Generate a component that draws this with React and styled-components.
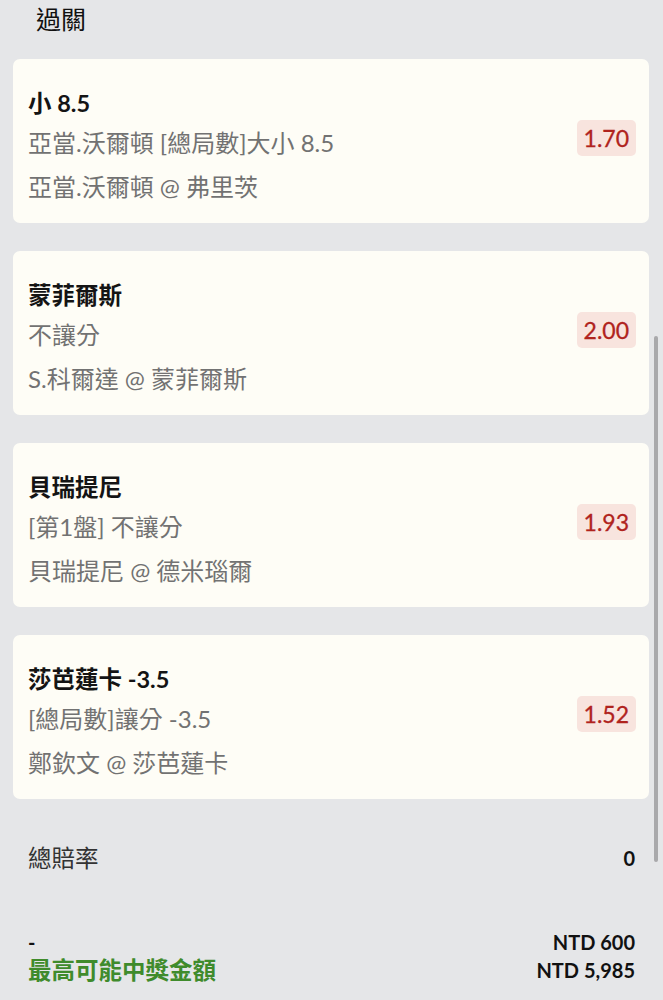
import React from 'react';
import styled, { createGlobalStyle } from 'styled-components';

const GlobalStyle = createGlobalStyle`
  html, body {
    margin: 0;
    padding: 0;
    background: #e5e6e8;
  }
  body {
    font-family: Lato, "Noto Sans CJK TC", sans-serif;
    color: #1a1a1a;
  }
`;

const Page = styled.div`
  position: relative;
  width: 663px;
  height: 1000px;
  overflow: hidden;
  box-sizing: border-box;
  padding: 0 14px 0 13px;
`;

const Heading = styled.div`
  font-size: 25px;
  line-height: 38px;
  padding-left: 23px;
  color: #111;
`;

const List = styled.div`
  display: flex;
  flex-direction: column;
  gap: 28px;
  margin-top: 21px;
`;

const Card = styled.div`
  background: #fefdf6;
  border-radius: 7px;
  height: 164px;
  box-sizing: border-box;
  padding: 26px 13px 0 15px;
  display: flex;
  align-items: center;
  justify-content: space-between;

  .__card_text{
    align-self: flex-start;
    display: flex;
    flex-direction: column;

    &__title{
      font-size: 23.5px;
      font-weight: 700;
      line-height: 36px;
      color: #141414;
    }

    &__line{
      font-size: 24px;
      line-height: 44px;
      color: #727272;
    }
  }
`;

const Odds = styled.div`
  background: #f8e4de;
  color: #b0231d;
  font-size: 23px;
  line-height: 36px;
  padding: 0 7px;
  border-radius: 5px;
  margin-top: -32px;
  -webkit-text-stroke: 0.3px #b0231d;
`;

const Summary = styled.div`
  display: flex;
  justify-content: space-between;
  align-items: center;
  padding: 0 14px 0 15px;
  margin-top: 42px;
  font-size: 23.5px;
  line-height: 34px;
  color: #333;

  b{
    font-size: 20px;
    color: #111;
  }
`;

const Totals = styled.div`
  display: grid;
  grid-template-columns: 1fr auto;
  padding: 0 14px 0 15px;
  margin-top: 53px;
  line-height: 28px;

  .__dash{
    font-size: 20px;
    font-weight: 700;
    color: #111;
  }
  .__label{
    font-size: 23.5px;
    font-weight: 700;
    color: #3f8b2c;
  }
  .__amount{
    font-size: 20px;
    font-weight: 700;
    color: #111;
    text-align: right;
  }
`;

const ScrollThumb = styled.div`
  position: absolute;
  right: 5px;
  top: 336px;
  width: 4px;
  height: 526px;
  border-radius: 2px;
  background: #a9a9ab;
`;

const bets = [
  { title: '小 8.5', market: '亞當.沃爾頓 [總局數]大小 8.5', match: '亞當.沃爾頓 @ 弗里茨', odds: '1.70' },
  { title: '蒙菲爾斯', market: '不讓分', match: 'S.科爾達 @ 蒙菲爾斯', odds: '2.00' },
  { title: '貝瑞提尼', market: '[第1盤] 不讓分', match: '貝瑞提尼 @ 德米瑙爾', odds: '1.93' },
  { title: '莎芭蓮卡 -3.5', market: '[總局數]讓分 -3.5', match: '鄭欽文 @ 莎芭蓮卡', odds: '1.52' },
];

const App = () => {
  return (
    <Page>
      <GlobalStyle />
      <Heading>過關</Heading>
      <List>
        {bets.map(bet => (
          <Card key={bet.title}>
            <div className={'__card_text'}>
              <div className={'__card_text__title'}>{bet.title}</div>
              <div className={'__card_text__line'}>{bet.market}</div>
              <div className={'__card_text__line'}>{bet.match}</div>
            </div>
            <Odds>{bet.odds}</Odds>
          </Card>
        ))}
      </List>
      <Summary>
        <span>總賠率</span>
        <b>0</b>
      </Summary>
      <Totals>
        <span className={'__dash'}>-</span>
        <span className={'__amount'}>NTD 600</span>
        <span className={'__label'}>最高可能中獎金額</span>
        <span className={'__amount'}>NTD 5,985</span>
      </Totals>
      <ScrollThumb />
    </Page>
  );
};

export default App;
